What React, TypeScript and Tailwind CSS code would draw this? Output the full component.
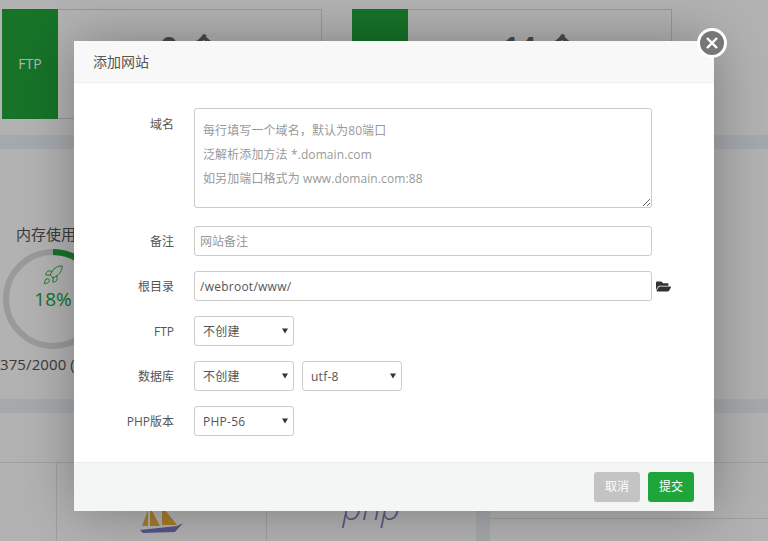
import React from "react";
import { Rocket } from "lucide-react";
import { FaFolderOpen } from "react-icons/fa";

const FONT = "[font-family:'Open_Sans','Noto_Sans_CJK_SC',sans-serif]";

function StatCard({ label, value, className }: { label: string; value: string; className: string }) {
  return (
    <div className={`flex h-[110px] w-[320px] border border-[#d8d8d8] ${className}`}>
      <div className="-mt-px -ml-px flex h-[110px] w-[56px] shrink-0 items-center justify-center bg-[#20a53a] text-sm text-white">
        {label}
      </div>
      <div className="flex flex-1 items-start justify-center pt-[19px] text-[30px] font-bold leading-[38px] [word-spacing:3px] text-[#6b6b6b]">
        {value}
      </div>
    </div>
  );
}

function Strip() {
  return <div className="h-[14px] shrink-0 bg-[#eef3f6]" />;
}

function Row({ label, children }: { label: string; children: React.ReactNode }) {
  return (
    <div className="flex h-[30px] items-start">
      <div className="h-[30px] w-[100px] shrink-0 text-right text-xs leading-[32px] text-[#555]">{label}</div>
      <div className="ml-[20px] flex items-center gap-2">{children}</div>
    </div>
  );
}

function Sel({ value }: { value: string }) {
  return (
    <div className="relative h-[30px] w-[100px]">
      <select
        defaultValue={value}
        className="h-[30px] w-[100px] appearance-none rounded-[3px] border border-[#cccccc] bg-white pt-px pl-[8px] text-xs tracking-[0.25px] text-[#555] outline-none"
      >
        <option>{value}</option>
      </select>
      <svg className="pointer-events-none absolute top-[12px] right-[6px]" width="6" height="6" viewBox="0 0 6 6">
        <path d="M0 0.5 H6 L3 5.5 Z" fill="#333" />
      </svg>
    </div>
  );
}

export default function App() {
  return (
    <div className={`relative h-[541px] w-[768px] overflow-hidden bg-white ${FONT}`}>
      {/* page behind the dialog */}
      <div className="flex h-full flex-col">
        <div className="flex h-[135px] shrink-0 pt-[9px] pl-[2px]">
          <StatCard label="FTP" value="0 个" className="" />
          <StatCard label="" value="14 个" className="ml-[30px]" />
        </div>
        <Strip />
        <div className="h-[250px] shrink-0 pt-[75px]">
          <div className="pl-[16px] text-[15px] leading-[20px] text-[#555]">内存使用率</div>
          <div className="relative mt-[5px] ml-[3px] h-[100px] w-[100px]">
            <svg viewBox="0 0 100 100" className="h-full w-full">
              <circle cx="50" cy="50" r="47" fill="none" stroke="#dddddd" strokeWidth="6" />
              <circle
                cx="50"
                cy="50"
                r="47"
                fill="none"
                stroke="#20a53a"
                strokeWidth="6"
                strokeDasharray="53.2 300"
                transform="rotate(-90 50 50)"
              />
            </svg>
            <div className="absolute inset-0 flex flex-col items-center pt-[15px] text-[#20a53a]">
              <Rocket size={22} strokeWidth={1} />
              <div className="mt-[1px] text-[19px] leading-[25px]">18%</div>
            </div>
          </div>
          <div className="mt-[5px] whitespace-nowrap text-[15px] leading-[20px] tracking-[0.1px] text-[#555]">375/2000 (MB)</div>
        </div>
        <Strip />
        <div className="h-[50px] shrink-0 border-b border-[#e4e4e4]" />
        <div className="flex flex-1">
          <div className="w-[57px] border-r border-[#e4e4e4]" />
          <div className="flex w-[210px] items-end justify-center border-r border-[#e4e4e4] pb-[7px]">
            <svg width="46" height="30" viewBox="0 0 46 30">
              <path d="M3 22 L9 6 L9 22 Z M11 22 L11 3 L21 22 Z" fill="#f0b040" />
              <path d="M23 21 L23 2 L38 21 Z" fill="#f0b040" />
              <path d="M1 26 L38 22 L44 19 L36 28 L4 29 Z" fill="#7a7bc5" />
            </svg>
          </div>
          <div className="flex w-[209px] justify-center pt-[26px]">
            <span className="text-[34px] font-light italic leading-[36px] text-[#7a7fc0]">php</span>
          </div>
          <div className="w-[14px] bg-[#eef3f6]" />
          <div className="flex-1">
            <div className="h-[56px] border-b border-[#e4e4e4]" />
          </div>
        </div>
      </div>

      {/* dimming overlay */}
      <div className="absolute inset-0 bg-black/30" />

      {/* dialog */}
      <div className="absolute top-[41px] left-[74px] flex h-[470px] w-[640px] flex-col bg-white shadow-[1px_1px_50px_rgba(0,0,0,0.3)]">
        <div className="h-[42px] shrink-0 border-b border-[#eeeeee] bg-[#f8f8f8] pl-[19px] text-sm leading-[41px] text-[#555]">
          添加网站
        </div>
        <div className="flex flex-1 flex-col gap-[15px] pt-[25px]">
          <div className="mb-[3px] flex items-start">
            <div className="w-[100px] shrink-0 pt-[6px] text-right text-xs leading-[18px] text-[#555]">
              <span className="relative top-[2px]">域名</span>
            </div>
            <textarea
              readOnly
              className="ml-[20px] h-[100px] w-[458px] rounded-[3px] border border-[#cccccc] px-[8px] py-[10px] text-xs leading-[24px] tracking-[0.1px] text-[#555] outline-none placeholder:text-[#999]"
              placeholder={"每行填写一个域名，默认为80端口\n泛解析添加方法 *.domain.com\n如另加端口格式为 www.domain.com:88"}
            />
          </div>
          <Row label="备注">
            <input
              readOnly
              placeholder="网站备注"
              className="h-[30px] w-[458px] rounded-[3px] border border-[#cccccc] px-[5px] pt-px text-xs text-[#555] outline-none placeholder:text-[#999]"
            />
          </Row>
          <Row label="根目录">
            <input
              readOnly
              value="/webroot/www/"
              className="h-[30px] w-[458px] rounded-[3px] border border-[#cccccc] px-[5px] pt-px text-xs tracking-[0.25px] text-[#555] outline-none"
            />
            <FaFolderOpen className="-ml-[4px] text-[15px] text-[#333]" />
          </Row>
          <Row label="FTP">
            <Sel value="不创建" />
          </Row>
          <Row label="数据库">
            <Sel value="不创建" />
            <Sel value="utf-8" />
          </Row>
          <Row label="PHP版本">
            <Sel value="PHP-56" />
          </Row>
        </div>
        <div className="flex h-[49px] shrink-0 items-center justify-end gap-2 border-t border-[#eeeeee] bg-[#f4f6f6] pr-[20px]">
          <button className="h-[30px] w-[46px] rounded-[3px] bg-[#c4c4c4] text-xs text-white">取消</button>
          <button className="h-[30px] w-[46px] rounded-[3px] bg-[#20a53a] text-xs text-white">提交</button>
        </div>
      </div>

      {/* close button */}
      <button className="absolute top-[28px] left-[697px] flex h-[30px] w-[30px] items-center justify-center rounded-full border-[3px] border-white bg-[#777777]">
        <svg width="14" height="14" viewBox="0 0 14 14">
          <path d="M2 2 L12 12 M12 2 L2 12" stroke="white" strokeWidth="2.4" />
        </svg>
      </button>
    </div>
  );
}
